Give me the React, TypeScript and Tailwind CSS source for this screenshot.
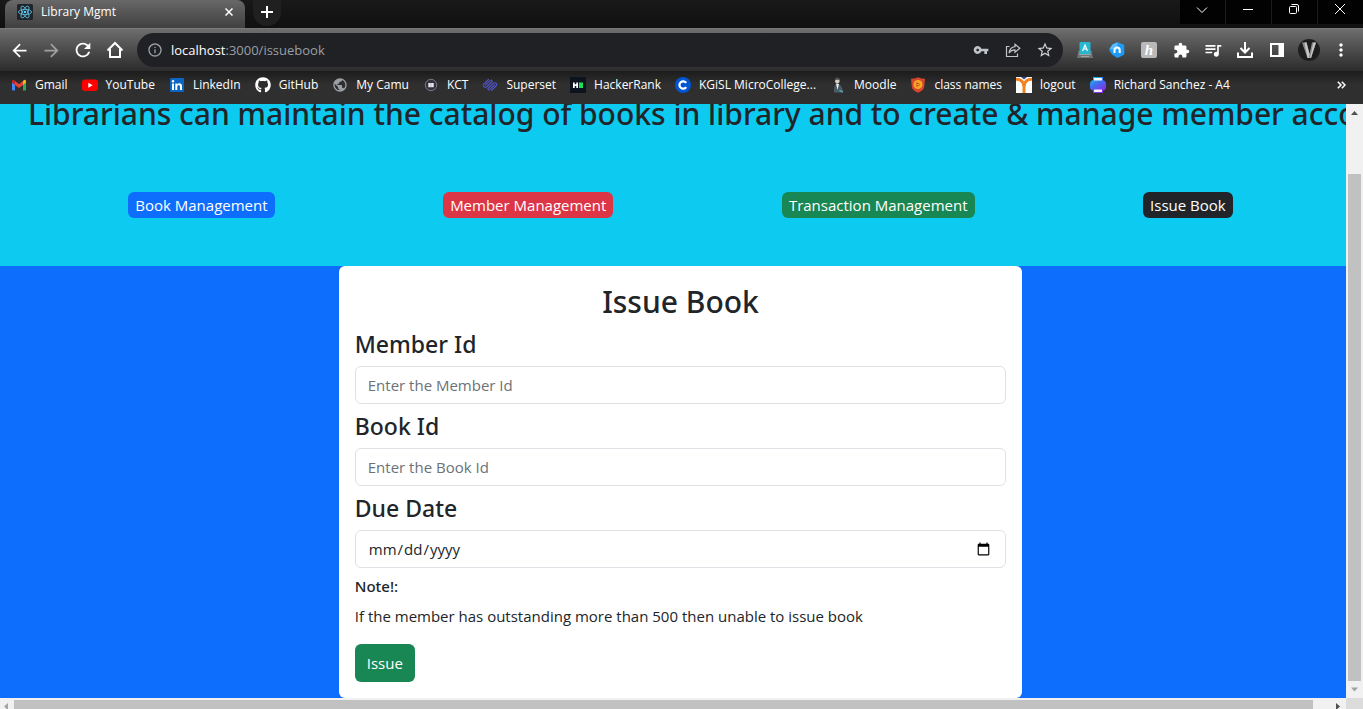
import type { ReactNode } from "react";
import {
  MdArrowBack,
  MdArrowForward,
  MdRefresh,
  MdInfoOutline,
  MdVpnKey,
  MdStarBorder,
  MdExtension,
  MdQueueMusic,
  MdMoreVert,
  MdPublic,
} from "react-icons/md";
import { FaGithub } from "react-icons/fa";

function ReactFavicon() {
  return (
    <svg viewBox="0 0 16 16" className="size-4 shrink-0" aria-hidden="true">
      <rect width="16" height="16" rx="1.5" fill="#20232a" />
      <g fill="none" stroke="#61c9e8" strokeWidth="0.8">
        <ellipse cx="8" cy="8" rx="6.6" ry="2.6" />
        <ellipse cx="8" cy="8" rx="6.6" ry="2.6" transform="rotate(60 8 8)" />
        <ellipse cx="8" cy="8" rx="6.6" ry="2.6" transform="rotate(120 8 8)" />
      </g>
      <circle cx="8" cy="8" r="1.3" fill="#61c9e8" />
    </svg>
  );
}

function TabStrip() {
  return (
    <div className="flex h-7 shrink-0 items-start bg-linear-to-b from-[#191919] to-[#101010]">
      <div className="ml-[5px] flex h-7 w-60 items-center rounded-t-lg bg-linear-to-b from-[#686868] to-[#404040] pr-2.5 pb-1 pl-3">
        <ReactFavicon />
        <span className="ml-2 flex-1 text-[12px] leading-4 text-white">Library Mgmt</span>
        <button aria-label="Close tab" className="flex size-3 items-center justify-center">
          <svg viewBox="0 0 8 8" className="size-2">
            <path d="M0.5 0.5 7.5 7.5M7.5 0.5 0.5 7.5" stroke="#fff" strokeWidth="1.5" />
          </svg>
        </button>
      </div>
      <button
        aria-label="New tab"
        className="ml-2 flex h-[26px] w-7 items-center justify-center rounded-b-full bg-[#202020] pb-0.5"
      >
        <svg viewBox="0 0 12 12" className="size-3">
          <path d="M6 0V12M0 6H12" stroke="#fff" strokeWidth="2" />
        </svg>
      </button>
      <div className="ml-auto flex h-6 gap-px bg-[#1b1b1b]">
        <WindowButton label="Search tabs">
          <path d="M1 5.5 6 10.500 11 5.500" />
        </WindowButton>
        <WindowButton label="Minimize">
          <path d="M1 7.500H11" />
        </WindowButton>
        <WindowButton label="Restore">
          <rect x="1.500" y="4.500" width="7" height="7" rx="1" />
          <path d="M3.500 2.500H9A1.500 1.500 0 0 1 10.500 4V9.500" />
        </WindowButton>
        <WindowButton label="Close">
          <path d="M1 2 11 12M11 2 1 12" />
        </WindowButton>
      </div>
    </div>
  );
}

function WindowButton({ label, children }: { label: string; children: ReactNode }) {
  return (
    <button aria-label={label} className="flex h-6 w-[45px] justify-center bg-[#020202] pt-0.5 pr-0.5">
      <svg viewBox="0 0 12 14" className="h-3.5 w-3" fill="none" stroke="#fff" strokeWidth="1">
        {children}
      </svg>
    </button>
  );
}

function ToolButton({ label, children }: { label: string; children: ReactNode }) {
  return (
    <button aria-label={label} className="flex size-8 shrink-0 items-center justify-center text-white">
      {children}
    </button>
  );
}

function Toolbar() {
  return (
    <div className="flex h-[43px] shrink-0 items-center border-t border-[#7a7a7a] bg-linear-to-b from-[#6e6e6e] to-[#2c2c2c] pr-1.5 pl-[3px]">
      <ToolButton label="Back">
        <MdArrowBack className="size-[21px]" />
      </ToolButton>
      <ToolButton label="Forward">
        <MdArrowForward className="size-[21px] text-[#a0a0a0]" />
      </ToolButton>
      <ToolButton label="Reload">
        <MdRefresh className="size-[22px]" />
      </ToolButton>
      <ToolButton label="Home">
        <svg viewBox="0 0 18 18" className="size-[18px]" fill="none" stroke="currentColor" strokeWidth="2">
          <path d="M1.500 9.500 9 2 16.500 9.500M4 8V16H14V8" />
        </svg>
      </ToolButton>
      <div className="ml-1.5 flex h-[34px] flex-1 items-center rounded-full bg-[#202124] pr-0.5 pl-2.5">
        <MdInfoOutline className="size-4 text-[#9aa0a6]" />
        <a href="#address" className="ml-2 flex-1 text-[13px] leading-5 text-[#9aa0a6]">
          <span className="text-white">localhost</span>:3000/issuebook
        </a>
        <ToolButton label="Passwords">
          <MdVpnKey className="size-4 text-[#c0c3c7]" />
        </ToolButton>
        <ToolButton label="Share">
          <svg viewBox="0 0 16 16" className="size-4" fill="none" stroke="#c0c3c7" strokeWidth="1.2">
            <path d="M4.500 4.500H1.500V14.500H12.500V11.500" />
            <path d="M10 2.200 14.800 6.200 10 10.200V7.800C7.500 7.800 5.500 8.800 4 11C4.500 7.500 6.500 5 10 4.600Z" />
          </svg>
        </ToolButton>
        <ToolButton label="Bookmark this page">
          <MdStarBorder className="size-[18px] text-[#d0d2d5]" />
        </ToolButton>
      </div>
      <div className="ml-1.5 flex">
        <ToolButton label="Translate">
          <svg viewBox="0 0 16 16" className="size-4">
            <path d="M1.500 8.500H14.500L16 16H0Z" fill="#6f7577" />
            <path d="M2.500 10.500H13.500M2 12.500H14M4 14.500H12" stroke="#a9b0b2" strokeWidth="0.8" />
            <rect x="2.500" y="0" width="11" height="12" rx="1" fill="#25b7cf" />
            <path d="M5.500 9 8 3 10.500 9M6.500 7H9.500" fill="none" stroke="#fff" strokeWidth="1.200" />
          </svg>
        </ToolButton>
        <ToolButton label="Nimbus">
          <svg viewBox="0 0 16 16" className="size-4">
            <path d="M8.500 0.300 14.500 2.500Q15.300 3 15.300 4V11.500Q15.300 12.500 14.500 13L9.500 15.600Q8.500 16 7.500 15.500L3 12.500L0.400 8.500Q0 7.800 0.500 7L3.500 2.500Z" fill="#1f9bf7" />
            <path d="M8.500 0.300 3.500 2.500 0.500 7 8 8Z" fill="#56bdff" />
            <path d="M5.500 11V8A2.600 2.600 0 0 1 10.700 8V11" fill="none" stroke="#fff" strokeWidth="2" />
          </svg>
        </ToolButton>
        <ToolButton label="Honey">
          <span className="flex size-4 items-center justify-center rounded-xs bg-[#b9b9b9] font-['Liberation_Serif',serif] text-[15px] leading-4 font-bold text-white italic">
            h
          </span>
        </ToolButton>
        <ToolButton label="Extensions">
          <MdExtension className="size-[17px]" />
        </ToolButton>
        <ToolButton label="Media">
          <MdQueueMusic className="size-5" />
        </ToolButton>
        <ToolButton label="Downloads">
          <svg viewBox="0 0 16 16" className="size-4" fill="none" stroke="#fff" strokeWidth="2">
            <path d="M8 0V10M3.500 6 8 10.500 12.500 6M1 10.500V15H15V10.500" />
          </svg>
        </ToolButton>
        <ToolButton label="Side panel">
          <svg viewBox="0 0 14 14" className="size-3.5">
            <path d="M0 0H14V14H0ZM2 2V12H8.500V2Z" fill="#fff" fillRule="evenodd" />
          </svg>
        </ToolButton>
        <ToolButton label="Profile">
          <svg viewBox="0 0 22 22" className="size-[22px]">
            <circle cx="11" cy="11" r="11" fill="#1e1e1e" />
            <path d="M4 3.500H8.500L11.500 15 14 3.500H18L13 19H9.500Z" fill="#8b8b8b" />
            <path d="M6.500 3.500H8.500L11.500 15 10.800 19H9.500ZM15.500 3.500H18L13 19H12Z" fill="#c6c6c6" />
          </svg>
        </ToolButton>
        <ToolButton label="Menu">
          <MdMoreVert className="size-5" />
        </ToolButton>
      </div>
    </div>
  );
}

const bookmarks: { label: string; icon: ReactNode }[] = [
  {
    label: "Gmail",
    icon: (
      <svg viewBox="0 0 16 16" className="size-4">
        <path d="M1 4V12.500Q1 13.500 2 13.500H4V7Z" fill="#4285f4" />
        <path d="M15 4V12.500Q15 13.500 14 13.500H12V7Z" fill="#34a853" />
        <path d="M12 4 13 3Q15 2 15 4.500V5.500L12 8Z" fill="#fbbc04" />
        <path d="M4 4 3 3Q1 2 1 4.500V5.500L4 8Z" fill="#c5221f" />
        <path d="M4 4 8 7.200 12 4V8L8 11 4 8Z" fill="#ea4335" />
      </svg>
    ),
  },
  {
    label: "YouTube",
    icon: (
      <svg viewBox="0 0 16 16" className="size-4">
        <rect y="2.500" width="16" height="11.500" rx="3" fill="#f00" />
        <path d="M6.300 5.800 10.700 8.250 6.300 10.700Z" fill="#fff" />
      </svg>
    ),
  },
  {
    label: "LinkedIn",
    icon: (
      <svg viewBox="0 0 16 16" className="size-4">
        <rect x="1" y="1" width="14" height="14" rx="1" fill="#0a66c2" />
        <path d="M3 6.500H5V13H3ZM6.300 6.500H8.200V7.400Q8.800 6.300 10.300 6.300Q13 6.300 13 9.400V13H11V9.700Q11 8 9.700 8Q8.300 8 8.300 9.700V13H6.300Z" fill="#fff" />
        <circle cx="4" cy="4.300" r="1.200" fill="#fff" />
      </svg>
    ),
  },
  { label: "GitHub", icon: <FaGithub className="size-4 text-white" /> },
  { label: "My Camu", icon: <MdPublic className="size-4 text-[#9aa0a6]" /> },
  {
    label: "KCT",
    icon: (
      <svg viewBox="0 0 16 16" className="size-4">
        <circle cx="8" cy="8" r="5.700" fill="#35333f" stroke="#77758a" />
        <rect x="5.300" y="6" width="5.400" height="4.200" fill="#e8e8ec" />
        <path d="M8 6V10.200" stroke="#9a9aa8" strokeWidth="0.600" />
      </svg>
    ),
  },
  {
    label: "Superset",
    icon: (
      <svg viewBox="0 0 16 16" className="size-4" fill="none" stroke="#4f55c4" strokeWidth="1.100" strokeLinecap="round">
        <path d="M6.500 2.500 2 7Q0.500 8.500 2 9.700Q3.500 10.800 5 9.500L10 4.500" />
        <path d="M9.500 13.500 14 9Q15.500 7.500 14 6.300Q12.500 5.200 11 6.500L6 11.500" />
        <path d="M8.300 3.300 3.500 8M7.700 12.700 12.500 8M6.500 13 6 11.500M10 4.500 9.500 3" />
      </svg>
    ),
  },
  {
    label: "HackerRank",
    icon: (
      <svg viewBox="0 0 16 16" className="size-4">
        <rect width="16" height="16" fill="#0e141e" />
        <path d="M3 5.500H4.700V7.300H6.300V5.500H8V11H6.300V8.900H4.700V11H3Z" fill="#fff" />
        <rect x="9" y="5.500" width="4" height="5.500" fill="#1ee05f" />
      </svg>
    ),
  },
  {
    label: "KGiSL MicroCollege...",
    icon: (
      <svg viewBox="0 0 16 16" className="size-4">
        <circle cx="8" cy="8" r="8" fill="#0056d2" />
        <path d="M11.200 5.900A3.700 3.700 0 1 0 11.200 10.100" fill="none" stroke="#fff" strokeWidth="2.200" />
      </svg>
    ),
  },
  {
    label: "Moodle",
    icon: (
      <svg viewBox="0 0 16 16" className="size-4">
        <path d="M4 15.500Q3.500 8 6.500 6.500L9 7Q13 10 13 15.500Z" fill="#4a5c68" />
        <path d="M6 6.500 7.500 13 9 7Z" fill="#eceff1" />
        <circle cx="7.300" cy="4" r="2.400" fill="#d9cfc8" />
        <path d="M4.900 3.500Q5 0.500 7.600 0.500Q10 1 9.800 3.500Q8 2 4.900 3.500Z" fill="#4c565d" />
        <path d="M9.500 13.500 13 15" stroke="#5b9cb5" strokeWidth="1.500" />
      </svg>
    ),
  },
  {
    label: "class names",
    icon: (
      <svg viewBox="0 0 16 16" className="size-4">
        <path d="M1 1.800Q5 1.800 8 0.300Q11 1.800 15 1.800L14.200 10Q13.500 13.500 8 15.800Q2.500 13.500 1.800 10Z" fill="#d9462f" />
        <circle cx="8" cy="7.500" r="4.500" fill="#f5a623" />
        <path d="M6 6.500H9Q10 7.500 9 8.500H6.500M7 5V10" fill="none" stroke="#c9572a" strokeWidth="0.900" />
      </svg>
    ),
  },
  {
    label: "logout",
    icon: (
      <svg viewBox="0 0 16 16" className="size-4">
        <rect width="16" height="16" fill="#fff" />
        <path d="M5 0H11L8 2.500Z" fill="#2b4a9b" />
        <path d="M0 2.200Q7 2 8 9Q9 2 16 2.200" fill="none" stroke="#f58220" strokeWidth="3" />
        <path d="M6.500 7H9.500V16H6.500Z" fill="#f58220" />
      </svg>
    ),
  },
  {
    label: "Richard Sanchez - A4",
    icon: (
      <svg viewBox="0 0 16 16" className="size-4">
        <defs>
          <linearGradient id="printer" x1="0" y1="0" x2="0.600" y2="1">
            <stop offset="0" stopColor="#16d0e0" />
            <stop offset="0.500" stopColor="#3f6ff0" />
            <stop offset="1" stopColor="#8a2be8" />
          </linearGradient>
        </defs>
        <path d="M3 0H13V3Q16 4 16 7V10Q16 13 13 13.500V16H3V13.500Q0 13 0 10V7Q0 4 3 3Z" fill="url(#printer)" />
        <rect x="4" y="1" width="8" height="2.500" rx="0.500" fill="#f4f8ff" />
        <rect x="4" y="12.500" width="8" height="2.500" rx="0.500" fill="#f4f0ff" />
      </svg>
    ),
  },
];

function BookmarksBar() {
  return (
    <nav
      aria-label="Bookmarks"
      className="flex h-[33px] shrink-0 items-center bg-linear-to-b from-[#1c1c1c] to-[#2f2f2f] to-40% pr-3.5 pb-1.5 pl-[11px]"
    >
      <ul className="flex flex-1 items-center gap-3.5 overflow-hidden">
        {bookmarks.map((bookmark) => (
          <li key={bookmark.label}>
            <a href="#bookmark" className="flex items-center gap-2 text-[12px] leading-4 whitespace-nowrap text-white">
              <span className="shrink-0" aria-hidden="true">
                {bookmark.icon}
              </span>
              {bookmark.label}
            </a>
          </li>
        ))}
      </ul>
      <button aria-label="More bookmarks" className="flex size-4 items-center justify-center">
        <svg viewBox="0 0 9 8" className="h-2 w-[9px]" fill="none" stroke="#fff" strokeWidth="1.500">
          <path d="M0.800 0.800 4 4 0.800 7.200M4.800 0.800 8 4 4.800 7.200" />
        </svg>
      </button>
    </nav>
  );
}

function VerticalScrollbar() {
  return (
    <div aria-hidden="true" className="flex w-[17px] shrink-0 flex-col items-center bg-[#f1f1f1]">
      <svg viewBox="0 0 17 17" className="size-[17px] shrink-0">
        <path d="M5 11 8.500 7 12 11Z" fill="#505050" />
      </svg>
      <div className="mt-[53px] w-[13px] flex-1 bg-[#c1c1c1]" />
      <svg viewBox="0 0 17 17" className="size-[17px] shrink-0">
        <path d="M5 6.500 8.500 10.500 12 6.500Z" fill="#a3a3a3" />
      </svg>
    </div>
  );
}

function HorizontalScrollbar() {
  return (
    <div aria-hidden="true" className="flex h-[11px] shrink-0 overflow-hidden bg-[#f1f1f1]">
      <svg viewBox="0 0 14 17" className="h-[17px] w-3.5 shrink-0">
        <path d="M8 5V12L4 8.500Z" fill="#a3a3a3" />
      </svg>
      <div className="mt-0.5 flex-1 bg-[#c1c1c1]" />
      <svg viewBox="0 0 33 17" className="h-[17px] w-[33px] shrink-0">
        <path d="M23 5V12L27 8.500Z" fill="#505050" />
      </svg>
      <div className="w-[17px] bg-[#dcdcdc]" />
    </div>
  );
}

function PageHeader() {
  return (
    <header className="bg-[#0dcaf0] pb-12">
      <p className="h-6 pl-7 font-['Noto_Sans',sans-serif] text-[30px] leading-5 font-medium whitespace-nowrap">
        Librarians can maintain the catalog of books in library and to create &amp; manage member accounts
      </p>
      <nav aria-label="Sections" className="mt-16 flex items-center justify-around px-11 text-[15px] leading-[26px] text-white">
        <a href="#books" className="rounded-md bg-[#0d6efd] px-[7px]">Book Management</a>
        <a href="#members" className="rounded-md bg-[#dc3545] px-[7px]">Member Management</a>
        <a href="#transactions" className="rounded-md bg-[#198754] px-[7px]">Transaction Management</a>
        <a href="#issue" className="rounded-md bg-[#212529] px-[7px]">Issue Book</a>
      </nav>
    </header>
  );
}

const fieldClass =
  "mt-2 mb-2 block h-[38px] w-full rounded-md border border-[#dee2e6] bg-white px-3 text-[15px] text-[#212529] placeholder:text-[#6c7278]";
const labelClass = "block font-['Noto_Sans',sans-serif] text-[23px] leading-7 font-medium";

function IssueForm() {
  return (
    <form className="w-[calc(50%+3px)] rounded-md bg-white p-4" onSubmit={(event) => event.preventDefault()}>
      <h1 className="mb-2 text-center font-['Noto_Sans',sans-serif] text-[30px] leading-10 font-medium">Issue Book</h1>
      <label htmlFor="member-id" className={labelClass}>Member Id</label>
      <input id="member-id" type="text" placeholder="Enter the Member Id" className={fieldClass} />
      <label htmlFor="book-id" className={labelClass}>Book Id</label>
      <input id="book-id" type="text" placeholder="Enter the Book Id" className={fieldClass} />
      <label htmlFor="due-date" className={labelClass}>Due Date</label>
      <input id="due-date" type="date" className={fieldClass} />
      <h2 className="mb-2 font-['Noto_Sans',sans-serif] text-[15px] leading-5 font-medium">Note!:</h2>
      <p className="mb-4 text-[15px] leading-6">
        If the member has outstanding more than 500 then unable to issue book
      </p>
      <button type="submit" className="h-[38px] rounded-md bg-[#198754] px-3 text-[15px] text-white">
        Issue
      </button>
    </form>
  );
}

export default function App() {
  return (
    <div className="flex h-screen flex-col overflow-hidden font-['Open_Sans','Noto_Sans',sans-serif] text-[#212529]">
      <TabStrip />
      <Toolbar />
      <BookmarksBar />
      <div className="flex min-h-0 flex-1">
        <div className="min-w-0 flex-1 overflow-hidden bg-[#0d6efd]">
          <div className="w-[calc(100%+15px)]">
            <PageHeader />
            <main className="flex justify-center">
              <IssueForm />
            </main>
          </div>
        </div>
        <VerticalScrollbar />
      </div>
      <HorizontalScrollbar />
    </div>
  );
}
